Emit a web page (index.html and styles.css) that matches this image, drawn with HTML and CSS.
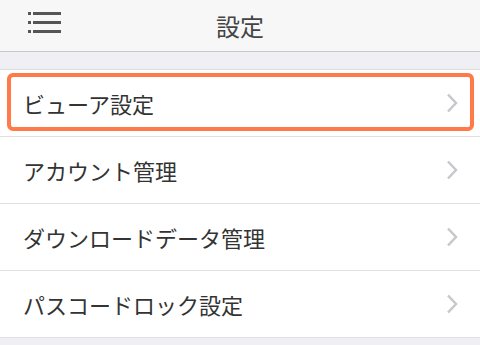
FILE: index.html
```html
<!DOCTYPE html>
<html lang="ja">
<head>
    <meta charset="UTF-8">
    <meta name="viewport" content="width=device-width, initial-scale=1.0">
    <title>設定</title>
    <link rel="stylesheet" href="styles.css">
</head>
<body>
    <header class="nav-bar">
        <button class="menu-button" aria-label="メニュー">
            <svg width="34" height="22" viewBox="0 0 34 22">
                <rect x="0" y="0" width="3" height="3" fill="#555"/>
                <rect x="0" y="9" width="3" height="3" fill="#555"/>
                <rect x="0" y="18" width="3" height="3" fill="#555"/>
                <rect x="5" y="0" width="28" height="3" fill="#555"/>
                <rect x="5" y="9" width="28" height="3" fill="#555"/>
                <rect x="5" y="18" width="28" height="3" fill="#555"/>
            </svg>
        </button>
        <h1 class="nav-title">設定</h1>
    </header>

    <div class="section-gap"></div>

    <ul class="settings-list">
        <li class="settings-item selected">
            <span class="label">ビューア設定</span>
            <svg class="chevron" width="12" height="20" viewBox="0 0 12 20">
                <polyline points="2,1.5 10,10 2,18.5" fill="none" stroke="#c7c7cc" stroke-width="2.5"/>
            </svg>
        </li>
        <li class="settings-item">
            <span class="label">アカウント管理</span>
            <svg class="chevron" width="12" height="20" viewBox="0 0 12 20">
                <polyline points="2,1.5 10,10 2,18.5" fill="none" stroke="#c7c7cc" stroke-width="2.5"/>
            </svg>
        </li>
        <li class="settings-item">
            <span class="label">ダウンロードデータ管理</span>
            <svg class="chevron" width="12" height="20" viewBox="0 0 12 20">
                <polyline points="2,1.5 10,10 2,18.5" fill="none" stroke="#c7c7cc" stroke-width="2.5"/>
            </svg>
        </li>
        <li class="settings-item">
            <span class="label">パスコードロック設定</span>
            <svg class="chevron" width="12" height="20" viewBox="0 0 12 20">
                <polyline points="2,1.5 10,10 2,18.5" fill="none" stroke="#c7c7cc" stroke-width="2.5"/>
            </svg>
        </li>
    </ul>
</body>
</html>
```

FILE: styles.css
```css
body {
    margin: 0;
    background: #efeff4;
    font-family: "Noto Sans CJK JP", "Noto Sans", sans-serif;
    color: #333;
}

.nav-bar {
    position: relative;
    display: flex;
    align-items: center;
    justify-content: center;
    height: 51px;
    background: #f7f7f7;
    border-bottom: 1px solid #c8c8cc;
}

.menu-button {
    position: absolute;
    left: 28px;
    top: 12px;
    padding: 0;
    border: none;
    background: none;
    line-height: 0;
}

.nav-title {
    margin: 0;
    font-size: 24px;
    font-weight: normal;
    color: #444;
}

.section-gap {
    height: 17px;
    border-bottom: 1px solid #dcdce0;
}

.settings-list {
    list-style: none;
    margin: 0;
    padding: 0;
    background: #fff;
}

.settings-item {
    position: relative;
    display: flex;
    align-items: center;
    justify-content: space-between;
    height: 66px;
    padding: 0 22px 0 23px;
    border-bottom: 1px solid #e0e0e0;
    font-size: 22px;
}

.settings-item .label {
    color: #333;
}

.chevron {
    display: block;
}

.settings-item.selected::after {
    content: "";
    position: absolute;
    top: 3px;
    left: 7px;
    right: 6px;
    bottom: 5px;
    border: 4px solid #ff7a48;
    border-radius: 6px;
}
```
